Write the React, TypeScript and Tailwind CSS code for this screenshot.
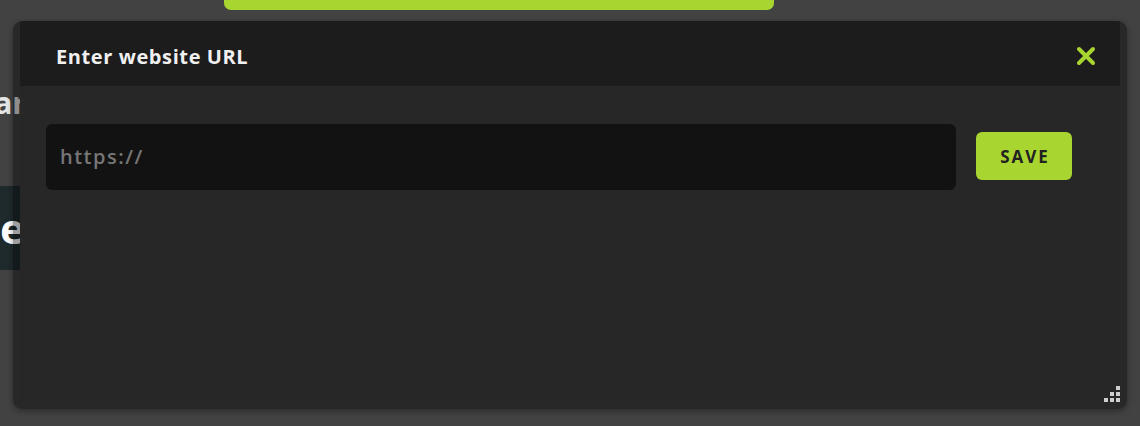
import React from "react";

export default function App() {
  return (
    <div className="relative h-[426px] w-[1140px] overflow-hidden bg-[#424242]" style={{ fontFamily: "'Open Sans', 'Noto Sans', sans-serif" }}>
      {/* page behind the modal */}
      <div className="ml-[224px] h-[10px] w-[550px] rounded-b-[7px] bg-[#a8d530]" />
      <div className="mt-[78px] flex w-[26px] justify-end overflow-hidden whitespace-nowrap text-[30px] font-bold leading-[30px] text-[#e6e6e6]">
        Dar
      </div>
      <div className="mt-[68px] flex h-[84px] w-[40px] items-center overflow-hidden bg-[#1f2a2c]">
        <span className="text-[42px] font-bold leading-none text-white">e</span>
      </div>

      {/* modal */}
      <div className="absolute left-[13px] top-[21px] flex h-[388px] w-[1114px] flex-col rounded-[9px] bg-[rgba(0,0,0,0.38)] px-[7px] pb-[7px] shadow-[0_2px_6px_rgba(0,0,0,0.35)]">
        <div className="flex h-[65px] shrink-0 items-center justify-between rounded-t-[2px] bg-[#1c1c1c] pl-[36px] pr-[24px] pt-[7px]">
          <h2 className="text-[20px] font-bold tracking-[0.6px] text-[#f0f0f0]">Enter website URL</h2>
          <svg width="20" height="20" viewBox="0 0 20 20" className="mb-[2px]">
            <path d="M3 3 L17 17 M17 3 L3 17" stroke="#a8d530" strokeWidth="4" strokeLinecap="round" />
          </svg>
        </div>
        <div className="relative flex flex-1 items-start gap-[20px] bg-[#272727] pl-[26px] pt-[38px]">
          <div className="flex h-[66px] w-[910px] items-center rounded-[6px] bg-[#121212] px-[14px]">
            <span className="text-[20px] font-semibold tracking-[1.5px] text-[#767676]">https://</span>
          </div>
          <button className="mt-[8px] flex h-[48px] w-[96px] items-center justify-center rounded-[6px] bg-[#a8d530] pl-[2px] pt-[1px] text-[17px] font-bold tracking-[2px] text-[#222]">
            SAVE
          </button>
          <div className="absolute bottom-0 right-0 grid grid-cols-3 gap-[2px]">
            <span className="h-[4px] w-[4px]" />
            <span className="h-[4px] w-[4px]" />
            <span className="h-[4px] w-[4px] bg-[#cfcfcf]" />
            <span className="h-[4px] w-[4px]" />
            <span className="h-[4px] w-[4px] bg-[#cfcfcf]" />
            <span className="h-[4px] w-[4px] bg-[#cfcfcf]" />
            <span className="h-[4px] w-[4px] bg-[#cfcfcf]" />
            <span className="h-[4px] w-[4px] bg-[#cfcfcf]" />
            <span className="h-[4px] w-[4px] bg-[#cfcfcf]" />
          </div>
        </div>
      </div>
    </div>
  );
}
